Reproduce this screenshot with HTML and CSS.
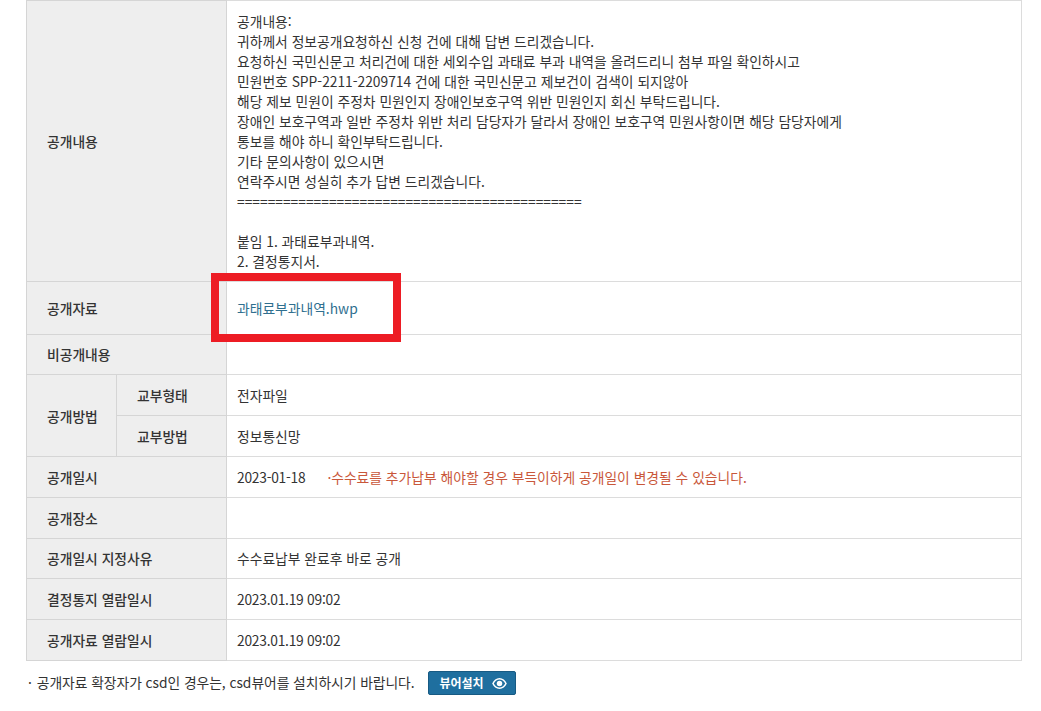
FILE: index.html
```html
<!DOCTYPE html>
<html lang="ko">
<head>
<meta charset="utf-8">
<title>공개내용</title>
<link rel="stylesheet" href="styles.css">
</head>
<body>
<main class="page">
<table class="info">
<colgroup><col class="c1"><col class="c2"><col></colgroup>
<tbody>
<tr>
<th colspan="2">공개내용</th>
<td class="body-text">공개내용:<br>귀하께서 정보공개요청하신 신청 건에 대해 답변 드리겠습니다.<br>요청하신 국민신문고 처리건에 대한 세외수입 과태료 부과 내역을 올려드리니 첨부 파일 확인하시고<br>민원번호 SPP-2211-2209714 건에 대한 국민신문고 제보건이 검색이 되지않아<br>해당 제보 민원이 주정차 민원인지 장애인보호구역 위반 민원인지 회신 부탁드립니다.<br>장애인 보호구역과 일반 주정차 위반 처리 담당자가 달라서 장애인 보호구역 민원사항이면 해당 담당자에게<br>통보를 해야 하니 확인부탁드립니다.<br>기타 문의사항이 있으시면<br>연락주시면 성실히 추가 답변 드리겠습니다.<br>=============================================<br><br>붙임 1. 과태료부과내역.<br>2. 결정통지서.</td>
</tr>
<tr class="r-file">
<th colspan="2">공개자료</th>
<td><a class="file" href="#">과태료부과내역.hwp</a></td>
</tr>
<tr class="r-40">
<th colspan="2">비공개내용</th>
<td></td>
</tr>
<tr>
<th rowspan="2">공개방법</th>
<th class="sub">교부형태</th>
<td>전자파일</td>
</tr>
<tr>
<th class="sub">교부방법</th>
<td>정보통신망</td>
</tr>
<tr>
<th colspan="2">공개일시</th>
<td><span class="date">2023-01-18</span><span class="notice">·수수료를 추가납부 해야할 경우 부득이하게 공개일이 변경될 수 있습니다.</span></td>
</tr>
<tr>
<th colspan="2">공개장소</th>
<td></td>
</tr>
<tr class="r-40">
<th colspan="2">공개일시 지정사유</th>
<td>수수료납부 완료후 바로 공개</td>
</tr>
<tr>
<th colspan="2">결정통지 열람일시</th>
<td class="date">2023.01.19 09:02</td>
</tr>
<tr>
<th colspan="2">공개자료 열람일시</th>
<td class="date">2023.01.19 09:02</td>
</tr>
</tbody>
</table>
<div class="foot">
<p class="foot-note"><span class="dot">·</span>공개자료 확장자가 csd인 경우는, csd뷰어를 설치하시기 바랍니다.</p>
<a class="viewer-btn" href="#">뷰어설치
<svg class="eye" viewBox="0 0 16 12" width="15" height="11" aria-hidden="true"><path fill-rule="evenodd" fill="#fff" d="M8 0C4.500 0 1.600 2.400 0 6c1.600 3.600 4.500 6 8 6s6.400-2.400 8-6c-1.600-3.600-4.500-6-8-6zm0 1.600c2.500 0 4.700 1.700 6.200 4.400-1.500 2.700-3.700 4.400-6.200 4.400S3.300 8.700 1.800 6C3.300 3.300 5.500 1.600 8 1.600z"/><circle cx="8" cy="6" r="3" fill="#fff"/></svg></a>
</div>
<div class="highlight"></div>
</main>
</body>
</html>
```

FILE: styles.css
```css
* { box-sizing: border-box; }
html, body { margin: 0; padding: 0; background: #fff; }
body {
  font-family: "Noto Sans CJK KR", "Noto Sans", sans-serif;
  font-size: 13.8px;
  line-height: 20px;
  color: #333;
  overflow: hidden;
}
.page { position: relative; height: 711px; padding-left: 26px; width: 1041px; }
.info {
  width: 996px;
  border-collapse: collapse;
  table-layout: fixed;
  border-top: 1px solid #d5d5d5;
}
.c1 { width: 90px; }
.c2 { width: 110px; }
.info th, .info td {
  border: 1px solid #dcdcdc;
  height: 41px;
  padding: 0 10px;
  font-weight: 400;
  text-align: left;
}
.info th {
  background: #eee;
  padding-left: 20px;
  color: #333;
  font-weight: 500;
  border-color: #d5d5d5;
}
.info td.body-text { padding: 10px 10px 10px; height: 280.5px; }
.info .r-file th, .info .r-file td { height: 53px; }
.info .r-40 th, .info .r-40 td { height: 40px; padding-bottom: 2px; }
.file { color: #2f6f8f; text-decoration: none; }
.date { letter-spacing: -0.25px; }
.notice { color: #c9573a; margin-left: 22px; }
.foot { display: flex; align-items: center; gap: 13px; margin-top: 10px; height: 24px; }
.foot-note { margin: 0 0 3px; color: #333; letter-spacing: -0.05px; }
.dot { margin: 0 5px 0 2px; }
.viewer-btn {
  display: flex;
  align-items: center;
  gap: 8px;
  height: 24px;
  width: 88px;
  justify-content: center;
  padding-left: 3px;
  background: #1f6f9f;
  border: 1px solid #175a83;
  border-radius: 2px;
  color: #fff;
  font-size: 12px;
  font-weight: 700;
  text-decoration: none;
}
.eye { flex: none; }
.highlight {
  position: absolute;
  left: 211px;
  top: 273px;
  width: 190px;
  height: 69px;
  border: 8px solid #ed1c24;
  pointer-events: none;
}
```
